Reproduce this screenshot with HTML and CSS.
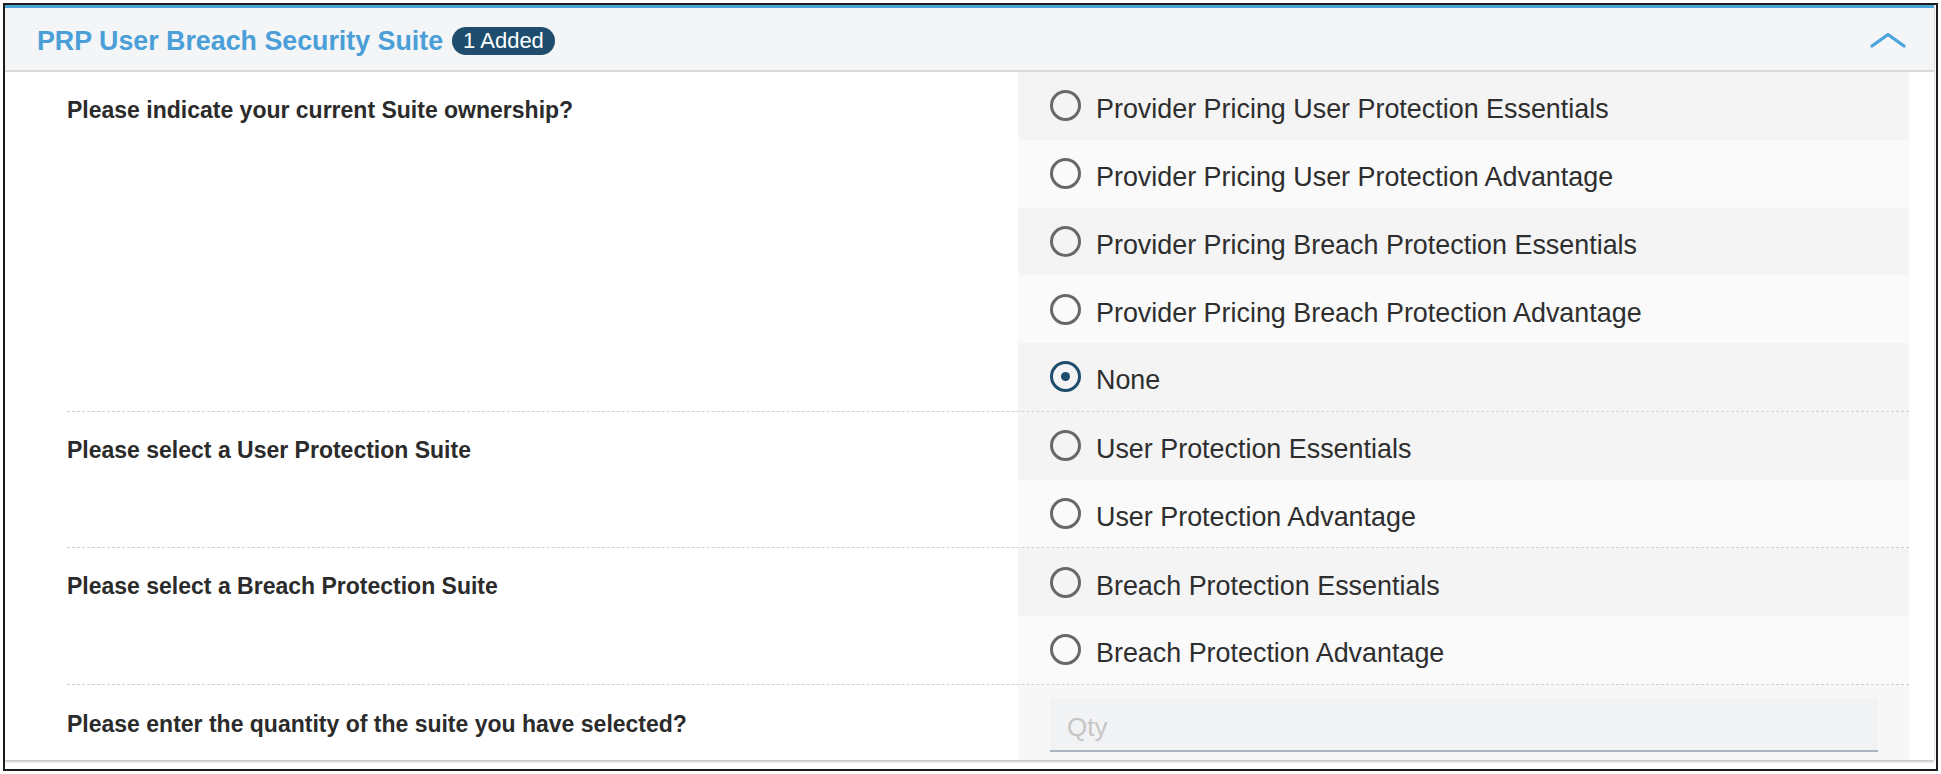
FILE: index.html
```html
<!DOCTYPE html>
<html lang="en">
<head>
<meta charset="utf-8">
<title>PRP User Breach Security Suite</title>
<link rel="stylesheet" href="styles.css">
</head>
<body>
<div class="frame">
  <section class="card">
    <header class="card-head">
      <h2 class="title">PRP User Breach Security Suite</h2>
      <span class="badge">1 Added</span>
      <svg class="chevron" width="36" height="16" viewBox="0 0 36 16" aria-hidden="true">
        <polyline points="2,14 18,2.5 34,14" fill="none" stroke="#4aa3db" stroke-width="3.2" stroke-linecap="round" stroke-linejoin="round"/>
      </svg>
    </header>
    <div class="card-body">
      <div class="q-row">
        <div class="q-label">Please indicate your current Suite ownership?</div>
        <div class="q-options">
          <label class="opt"><span class="radio"></span><span class="opt-text">Provider Pricing User Protection Essentials</span></label>
          <label class="opt"><span class="radio"></span><span class="opt-text">Provider Pricing User Protection Advantage</span></label>
          <label class="opt"><span class="radio"></span><span class="opt-text">Provider Pricing Breach Protection Essentials</span></label>
          <label class="opt"><span class="radio"></span><span class="opt-text">Provider Pricing Breach Protection Advantage</span></label>
          <label class="opt"><span class="radio checked"></span><span class="opt-text">None</span></label>
        </div>
      </div>
      <div class="q-row">
        <div class="q-label">Please select a User Protection Suite</div>
        <div class="q-options">
          <label class="opt"><span class="radio"></span><span class="opt-text">User Protection Essentials</span></label>
          <label class="opt"><span class="radio"></span><span class="opt-text">User Protection Advantage</span></label>
        </div>
      </div>
      <div class="q-row">
        <div class="q-label">Please select a Breach Protection Suite</div>
        <div class="q-options">
          <label class="opt"><span class="radio"></span><span class="opt-text">Breach Protection Essentials</span></label>
          <label class="opt"><span class="radio"></span><span class="opt-text">Breach Protection Advantage</span></label>
        </div>
      </div>
      <div class="q-row q-last">
        <div class="q-label q-label-qty">Please enter the quantity of the suite you have selected?</div>
        <div class="q-options q-qty">
          <input class="qty-input" type="text" placeholder="Qty">
        </div>
      </div>
    </div>
  </section>
</div>
</body>
</html>
```
FILE: styles.css
```css
* { box-sizing: border-box; }

html, body {
  margin: 0;
  padding: 0;
  background: #ffffff;
}

body {
  font-family: "Liberation Sans", Arial, Helvetica, sans-serif;
  color: #333333;
}

.frame {
  margin: 3px;
  height: 768px;
  border: 2px solid #1d1d1d;
  background: #ffffff;
}

.card {
  margin-right: 2px;
  height: 755px;
  border-top: 3px solid #4aa3db;
  background: #ffffff;
  box-shadow: 0 2px 2px rgba(0, 0, 0, 0.22), 1px 0 1px rgba(0, 0, 0, 0.06);
  display: flex;
  flex-direction: column;
}

.card-head {
  height: 64px;
  flex: 0 0 auto;
  background: #f4f5f7;
  border-bottom: 2px solid #dadada;
  display: flex;
  align-items: center;
  padding: 4px 28px 0 32px;
}

.title {
  margin: 0;
  font-size: 26.8px;
  font-weight: 700;
  color: #4a9fd8;
  letter-spacing: 0;
}

.badge {
  margin-left: 9px;
  height: 28px;
  padding: 0 11px;
  border-radius: 14px;
  background: #1e4d6d;
  color: #ffffff;
  font-size: 22px;
  line-height: 28px;
  display: inline-flex;
  align-items: center;
}

.chevron {
  margin-left: auto;
  margin-top: -2px;
}

.card-body {
  flex: 1 1 auto;
  padding: 0 25px 0 62px;
  display: flex;
  flex-direction: column;
}

.q-row {
  display: grid;
  grid-template-columns: 951px 1fr;
  border-bottom: 1px dashed #cfcfcf;
}

.q-row.q-last {
  border-bottom: none;
  flex: 1 1 auto;
}

.q-label {
  padding-top: 24px;
  font-size: 23px;
  font-weight: 700;
  line-height: 28px;
  color: #2b2b2b;
}

.q-label-qty {
  padding-top: 25px;
}

.q-options {
  display: flex;
  flex-direction: column;
}

.opt {
  height: 67.75px;
  display: flex;
  align-items: center;
  padding-left: 32px;
  background: #fafafa;
  cursor: pointer;
}

.opt:nth-child(odd) {
  background: #f4f4f4;
}

.radio {
  width: 31px;
  height: 31px;
  flex: 0 0 auto;
  border-radius: 50%;
  border: 3px solid #686868;
  display: flex;
  align-items: center;
  justify-content: center;
  margin-top: 0;
}

.radio.checked {
  border-color: #1e4d6d;
}

.radio.checked::after {
  content: "";
  width: 9px;
  height: 9px;
  border-radius: 50%;
  background: #1e4d6d;
}

.opt-text {
  margin-left: 15px;
  font-size: 26.9px;
  color: #2e2e2e;
  padding-top: 8px;
}

.q-qty {
  background: #f7f7f7;
  padding: 13px 31px 8px 32px;
}

.qty-input {
  display: block;
  width: 100%;
  height: 54px;
  border: none;
  border-bottom: 2px solid #a9b4c1;
  background: #f2f3f5;
  padding: 7px 17px 0;
  font-family: "Liberation Sans", Arial, Helvetica, sans-serif;
  font-size: 26px;
  color: #333333;
  outline: none;
}

.qty-input::placeholder {
  color: #c6c6c6;
}
```
